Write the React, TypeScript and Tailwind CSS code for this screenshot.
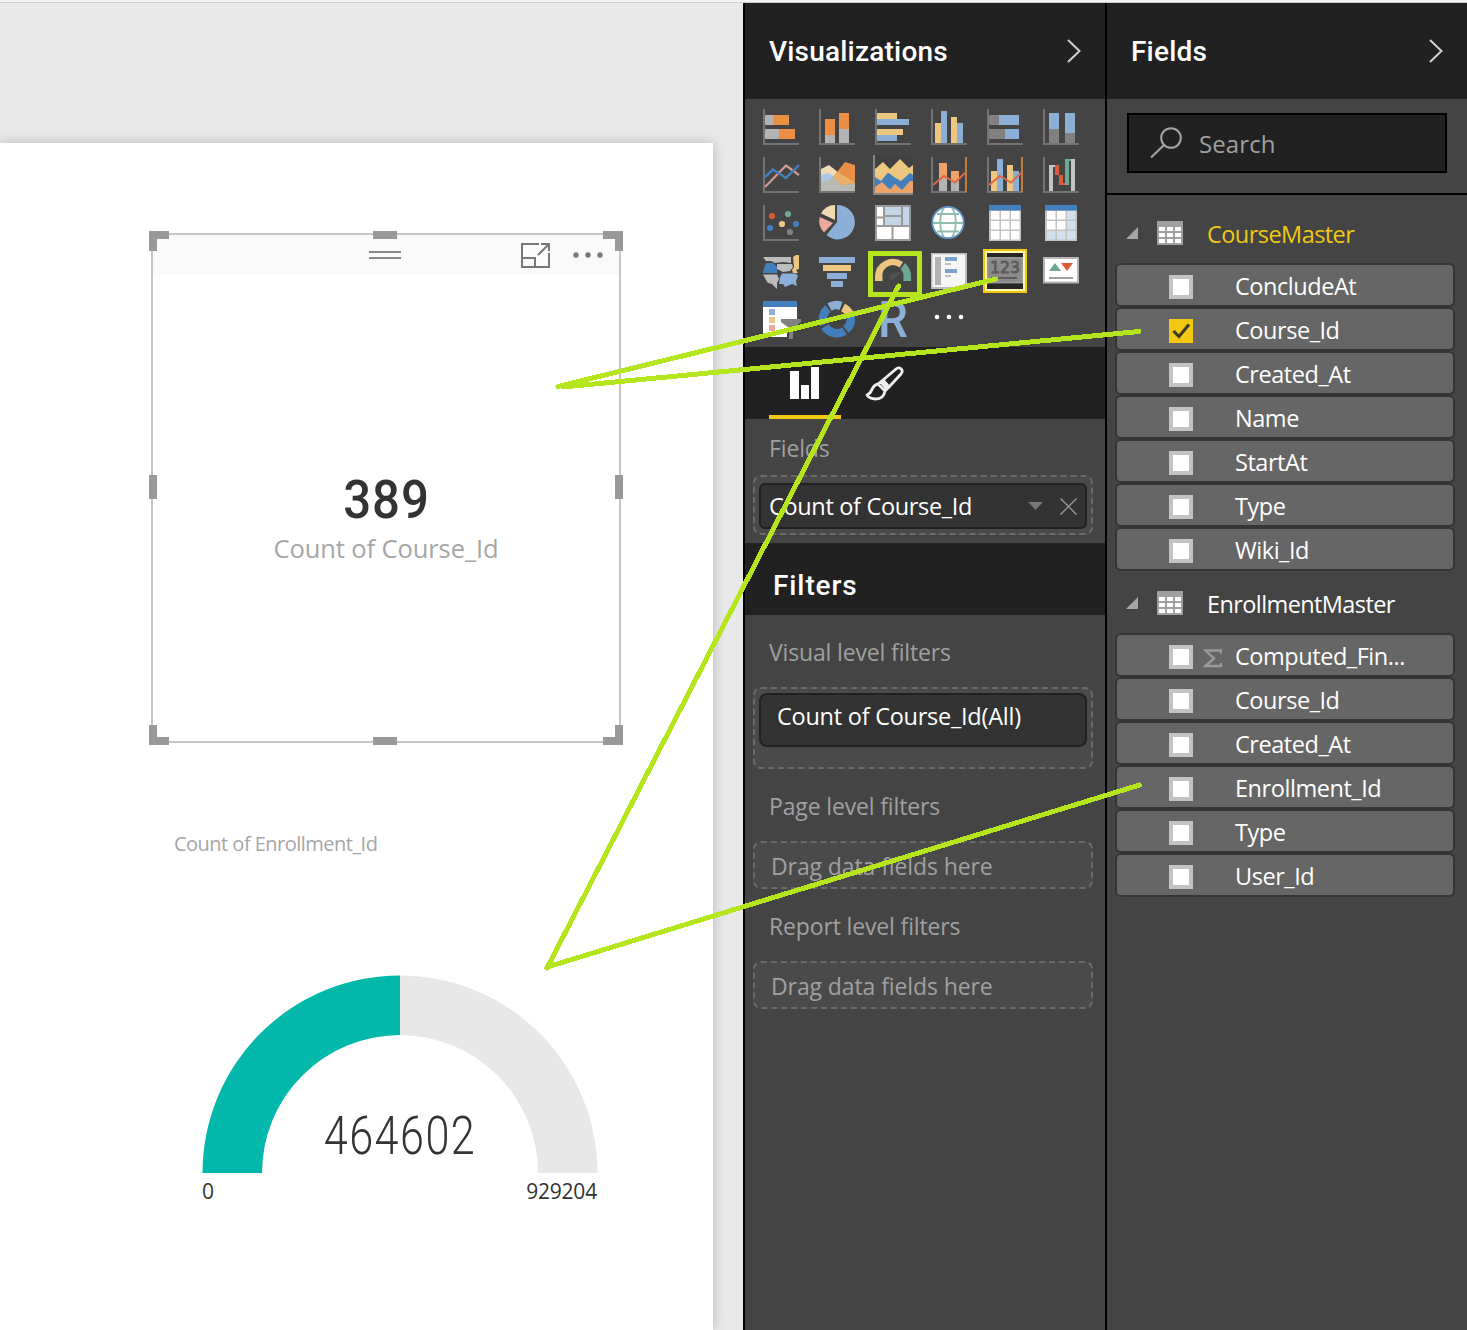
import type { ReactNode } from "react";

const OR = "#ea8f43", GY = "#b3b3b3", DG = "#808080", YE = "#edc680", BL = "#8bafd6", DB = "#447fbd", RD = "#dd5b3a", GN = "#6ca892", PK = "#eaa99b";

type R = [number, number, number, number, string];
const Bars = ({ r }: { r: R[] }) => (
  <>
    {r.map(([x, y, x2, y2, c], i) => (
      <rect key={i} x={x} y={y} width={x2 - x} height={y2 - y} fill={c} />
    ))}
  </>
);
const Axis = () => <path d="M0 0H2V34H36V36H0Z" fill="#747474" />;

const clustered: R[] = [[4, 14, 10, 34, YE], [10, 2, 16, 34, BL], [20, 8, 26, 34, YE], [26, 14, 32, 34, BL]];

const GridTable = ({ tint }: { tint?: boolean }) => (
  <>
    <Bars r={[[2, 0, 34, 36, "#c3c3c3"], [2, 0, 34, 5.5, DB]]} />
    {[6, 16, 26].map((y) =>
      [4, 14, 24].map((x) => (
        <rect key={x + "-" + y} x={x} y={y} width="8.5" height="8.5" fill={tint && (x === 24 || y === 26) ? "#d3e0ee" : "#fff"} />
      ))
    )}
  </>
);

const icons: ReactNode[] = [
  <><Axis /><Bars r={[[2, 6, 10, 16, GY], [10, 6, 26, 16, OR], [2, 20, 16, 30, GY], [16, 20, 32, 30, OR]]} /></>,
  <><Axis /><Bars r={[[6, 10, 16, 26, OR], [6, 26, 16, 34, GY], [20, 4, 30, 20, OR], [20, 20, 30, 34, GY]]} /></>,
  <><Axis /><Bars r={[[2, 4, 22, 10, YE], [2, 10, 34, 16, BL], [2, 20, 28, 26, YE], [2, 26, 22, 32, BL]]} /></>,
  <><Axis /><Bars r={clustered} /></>,
  <><Axis /><Bars r={[[2, 6, 12, 16, DG], [12, 6, 32, 16, BL], [2, 20, 18, 30, DG], [18, 20, 32, 30, BL]]} /></>,
  <><Axis /><Bars r={[[6, 4, 16, 20, BL], [6, 20, 16, 34, DG], [22, 4, 32, 24, BL], [22, 24, 32, 34, DG]]} /></>,
  <>
    <Axis />
    <path d="M2 30L23 8.5L36 18" fill="none" stroke="#cf9a90" strokeWidth="2.2" />
    <path d="M2 20L10 12.5L23 21L36 8" fill="none" stroke={DB} strokeWidth="2.4" />
  </>,
  <>
    <Axis />
    <path d="M2 12L10 8L20 16L20 30H2Z" fill="#f2dcb6" />
    <path d="M2 18L9 16L20 22L20 30H2Z" fill="#a9cbe6" />
    <path d="M2 24L9 24L14 20L24 28L36 25V34H2Z" fill="#b9b9b6" />
    <path d="M14 20L26 5L36 8V26L24 28.5Z" fill={OR} />
    <path d="M14 20L19 15L36 25.5L24 28.5Z" fill="#eaaf68" />
  </>,
  <>
    <path d="M-2 -2H0V36H38V38H-2Z" fill="#858585" />
    <path d="M0 -2H38V36H0Z" fill="#404040" />
    <path d="M0 12L8 5L15 12L25 2L34 11L38 8V36H0Z" fill={YE} />
    <path d="M0 20L6 24L13 15.5L19 20L26 24L35 16L38 18V36H0Z" fill={DB} />
    <path d="M0 30L7 25L15 32.5L20 27L27 33L35 24L38 24V36H0Z" fill="#eda267" />
  </>,
  <>
    <Axis />
    <Bars r={[[8, 6, 16, 22, "#eda267"], [8, 22, 16, 34, GY], [20, 14, 28, 24, "#eda267"], [20, 24, 28, 34, GY], [34, 0, 36, 35, "#c47c3c"]]} />
    <path d="M2 28L13 19L24 25.5L34 16" fill="none" stroke="#dd6a45" strokeWidth="2" />
  </>,
  <>
    <Axis />
    <Bars r={[...clustered, [34, 0, 36, 35, "#c47c3c"]]} />
    <path d="M2 28L13 19L24 25.5L34 16" fill="none" stroke="#dd6a45" strokeWidth="2" />
  </>,
  <>
    <Axis />
    <Bars r={[[6, 8, 10, 34, "#c4c4c4"], [10, 8, 12, 10, "#c4c4c4"], [12, 8, 16, 18, RD], [16, 18, 20, 28, RD], [20, 26, 22, 28, RD], [22, 2, 26, 28, GN], [26, 2, 28, 4, GN], [28, 2, 32, 34, "#c4c4c4"]]} />
  </>,
  <>
    <Axis />
    {([[9, 11, RD], [25, 9, GN], [19, 19, YE], [33, 19, DB], [7, 23, DB], [27, 27, DG]] as [number, number, string][]).map(([x, y, c]) => (
      <circle key={x} cx={x} cy={y} r="3.1" fill={c} />
    ))}
  </>,
  <>
    <path d="M18 0A17 17.2 0 1 1 7.5 30L18 17Z" fill={BL} />
    <path d="M2 8.5A16 16 0 0 1 16 0V15Z" fill="#f0dab2" />
    <path d="M0.8 12L14 18L5 27.5A16 16 0 0 1 0.8 12Z" fill={PK} />
  </>,
  <Bars r={[[0, 0, 36, 36, "#9a9a9a"], [2, 2, 8, 11.5, "#fff"], [2, 13.5, 8, 20, "#fff"], [10, 2, 26, 10, "#c5d6e9"], [10, 12, 26, 20, "#c5d6e9"], [28, 2, 34, 20, "#c5d6e9"], [2, 22, 16.5, 34, "#fff"], [18.5, 22, 34, 34, "#fff"]]} />,
  <>
    <circle cx="17" cy="17.5" r="15.7" fill="#fff" stroke="#5b93c6" strokeWidth="1.8" />
    <path d="M2 18H32M6 9H28M6 26.5H28M13 3C8 10 8 25 13 32M21 3C26 10 26 25 21 32" fill="none" stroke="#8fbcac" strokeWidth="1.8" />
  </>,
  <GridTable />,
  <GridTable tint />,
  <>
    <path d="M0 4H28V10L20 9L12 10L8 8L3 8Z" fill="#bdbdbd" />
    <path d="M30 4L33 2H36V16L33 17L35 20L30 20L29 17L31 14Z" fill={YE} />
    <path d="M3 10H10L14 14V20H0L1 15Z" fill={DB} />
    <path d="M14 11H29L30 14L27 18L20 19L14 16Z" fill="#bdbdbd" />
    <path d="M0 21.5H14L16 26L14 30V36L9 31L5 30L3 27Z" fill="#bdbdbd" />
    <path d="M17 24L19 20.5H33L35 23L33 28L34 33L29 31L22 34L20 31L16 31Z" fill={BL} />
  </>,
  <Bars r={[[0, 4, 36, 10, BL], [4, 12, 32, 18, YE], [8, 20, 28, 26, BL], [12, 28, 24, 34, BL]]} />,
  <>
    <path d="M0 28V24A18 18 0 0 1 28 9L24.5 14.5A10.5 10.5 0 0 0 7.5 24V28Z" fill={YE} />
    <path d="M30 10A18 18 0 0 1 36 24V28H28.5V24A10 10 0 0 0 25.5 16Z" fill={GN} />
    <path d="M27 18L19 26A2.6 2.6 0 1 1 15 22Z" fill="#525252" />
  </>,
  <Bars r={[[0, 0, 36, 36, "#bfbfbf"], [1.5, 1.5, 34, 34, "#f6f6f6"], [4, 4, 10, 32, GY], [14, 4, 26, 8, "#7ba3d0"], [14, 10, 20, 12, "#c0c0c0"], [14, 16, 26, 20, "#7ba3d0"], [14, 22, 20, 24, "#c0c0c0"]]} />,
  <>
    <rect width="36" height="36" fill="#262626" />
    <rect x="0.7" y="4.7" width="34.6" height="25" fill="#8b8b8b" stroke="#9b9b9b" strokeWidth="1.4" />
    <text x="3" y="20" fontFamily="DejaVu Sans" fontSize="16.5" textLength="30" lengthAdjust="spacingAndGlyphs" fill="#5c5c5c" stroke="#5c5c5c" strokeWidth="0.9">123</text>
    <rect x="4" y="24" width="26" height="2" fill="#5c5c5c" />
    <path d="M-4 -4H40V40H-4ZM-2 -2V38H38V-2Z" fill="#f2c811" fillRule="evenodd" />
    <path d="M-2 -2H38V38H-2ZM0 0V36H36V0Z" fill="#fff7b0" fillRule="evenodd" />
  </>,
  <>
    <rect x="1" y="5" width="34" height="24.5" fill="#fff" stroke="#b5b5b5" strokeWidth="2" />
    <path d="M6 18L12 10L18 18Z" fill={GN} />
    <path d="M18 10H30L24 18Z" fill={RD} />
    <rect x="6" y="24" width="24" height="2" fill="#a0a0a0" />
  </>,
  <>
    <Bars r={[[0, 0, 34, 36, "#fff"], [0, 0, 34, 6, DB], [6, 8, 12, 14, BL], [6, 16, 12, 22, YE], [6, 24, 12, 30, PK]]} />
    <path d="M24 28H34V36H24Z" fill="#444" />
    <path d="M18 18H38V21L30 27V38H26V27L18 21Z" fill="#808080" />
  </>,
  <g fill="none" strokeWidth="8.5">
    <path d="M10.5 6A13.5 13.5 0 0 1 22 5" stroke={BL} />
    <path d="M24 6.5A13.5 13.5 0 0 1 30.5 13" stroke={YE} />
    <path d="M31.5 15A13.8 13.8 0 0 1 27 28.5" stroke={DB} />
    <path d="M25.5 30A13.8 13.8 0 0 1 6 25.5" stroke={DB} />
    <path d="M5 23.5A13.8 13.8 0 0 1 9 7.5" stroke={DB} />
  </g>,
  <text x="3" y="36" fontFamily="Roboto" fontWeight="500" fontSize="50.5" textLength="30" lengthAdjust="spacingAndGlyphs" fill={BL}>R</text>,
  <g fill="#fff"><circle cx="6" cy="16" r="2.3" /><circle cx="18" cy="16" r="2.3" /><circle cx="30" cy="16" r="2.3" /></g>,
];

const PanelHead = ({ title }: { title: string }) => (
  <header className="flex h-24 shrink-0 items-center justify-between bg-[#212121] pl-6 pr-[23px]">
    <h2 className="pt-[2px] font-['Roboto'] text-[28px] font-medium tracking-[0.2px] text-white">{title}</h2>
    <svg width="16" height="26" viewBox="0 0 16 26" fill="none" stroke="#d0d0d0" strokeWidth="2"><path d="M2 2L13.5 13L2 24" /></svg>
  </header>
);

const Label = ({ children }: { children: ReactNode }) => (
  <div className="pb-[2px] pl-4 text-[23px] leading-[30px] tracking-[-0.15px] text-[#a0a0a0]">{children}</div>
);

const Drop = () => (
  <div className="flex h-12 items-center rounded-lg border-2 border-dashed border-[#6a6a6a] bg-[#4a4a4a] pl-4 pt-[2px] text-[23px] tracking-[-0.1px] text-[#a0a0a0]">
    Drag data fields here
  </div>
);

const Field = ({ name, checked, sum }: { name: string; checked?: boolean; sum?: boolean }) => (
  <li className="flex h-11 items-center rounded-md border-2 border-[#353535] bg-[#666] pl-13 pt-1">
    {checked ? (
      <svg className="size-6 bg-[#f2c811]" viewBox="0 0 24 24" fill="none" stroke="#3a3a30" strokeWidth="3"><path d="M4.5 12L10 17.5L20 5.5" /></svg>
    ) : (
      <span className="size-6 border-4 border-[#c3c3c3] bg-white" />
    )}
    <span className="flex w-[42px] items-center pl-[10px] pt-[2px]">
      {sum && (
        <svg width="19" height="19" viewBox="0 0 19 19" fill="none" stroke="#9a9a9a" strokeWidth="2.4"><path d="M18 4.5V1.5H2.5L11 9.5L2.5 17H18V14" /></svg>
      )}
    </span>
    <span className="text-[23.5px] tracking-[-0.45px] text-white">{name}</span>
  </li>
);

const TableHead = ({ name, active }: { name: string; active?: boolean }) => (
  <div className="flex h-[62px] items-center pl-[11px] pt-[2px]">
    <svg width="12" height="12" viewBox="0 0 12 12"><path d="M12 0V12H0Z" fill="#a6a6a6" /></svg>
    <svg className="ml-[19px] -mt-px" width="26" height="24" viewBox="0 0 26 24">
      <rect width="26" height="24" fill="#a0a0a0" />
      {[6, 12, 18].map((y) => [2, 10, 18].map((x) => <rect key={x + "-" + y} x={x} y={y} width="6" height="4" fill="#fff" />))}
    </svg>
    <span className={active ? "ml-6 mt-1 text-[23.5px] tracking-[-0.55px] text-[#f2c811]" : "ml-6 mt-1 text-[23.5px] tracking-[-0.6px] text-white"}>{name}</span>
  </div>
);

const Handles = () => (
  <svg className="absolute -left-1 -top-1" width="474" height="514" fill="#999">
    <path d="M0 0H20V8H8V20H0ZM454 0H474V20H466V8H454ZM0 494H8V506H20V514H0ZM466 494H474V514H454V506H466Z" />
    <path d="M224 0H248V8H224ZM224 506H248V514H224ZM0 244H8V268H0ZM466 244H474V268H466Z" />
  </svg>
);

export default function App() {
  return (
    <div className="relative flex h-[1330px] w-[1467px] flex-col overflow-hidden bg-[#f3f3f3] font-['Open_Sans',sans-serif]">
      <div className="h-[3px] shrink-0 border-b border-[#cfcfcf]" />
      <div className="flex min-h-0 flex-1">
        <main className="w-[743px] bg-[#e9e9e9] pt-[140px]">
          <div className="h-full w-[713px] bg-white pl-[151px] pt-[90px] shadow-[0_0_12px_rgba(0,0,0,0.22)]">
            <section className="relative flex h-[510px] w-[470px] flex-col border-2 border-[#c6c6c6]">
              <div className="flex h-10 shrink-0 items-center bg-[#fafafa] pl-[216px]">
                <svg width="32" height="8" viewBox="0 0 32 8" fill="#888"><path d="M0 0H32V2H0ZM0 6H32V8H0Z" /></svg>
                <svg className="ml-[120px]" width="29" height="25" viewBox="0 0 29 25" fill="none" stroke="#777" strokeWidth="2">
                  <path d="M18 1H1V24H28V10M1 15H14V24M17 12L27 2M20 1H28V8" />
                </svg>
                <svg className="ml-[23px]" width="30" height="6" viewBox="0 0 30 6" fill="#777"><circle cx="3" cy="3" r="2.7" /><circle cx="15" cy="3" r="2.7" /><circle cx="27" cy="3" r="2.7" /></svg>
              </div>
              <div className="flex flex-col items-center pt-[191px]">
                <div className="ml-[2px] scale-x-[0.91] font-['Roboto'] text-[54px] font-medium leading-[68px] tracking-[1px] text-[#333]">389</div>
                <div className="-mt-[2px] text-[25.5px] leading-8 tracking-[-0.1px] text-[#a6a6a6]">Count of Course_Id</div>
              </div>
              <Handles />
            </section>
            <section className="w-[470px] pl-[23px] pt-[85px]">
              <div className="text-[20px] leading-8 tracking-[-0.52px] text-[#a6a6a6]">Count of Enrollment_Id</div>
              <div className="relative ml-7 mt-[115px] w-[396px]">
                <svg width="396" height="198" viewBox="0 0 396 198">
                  <path d="M0.5 198A197.5 197.5 0 0 1 198 0.5V60A138 138 0 0 0 60 198Z" fill="#01b8aa" />
                  <path d="M198 0.5A197.5 197.5 0 0 1 395.5 198H336A138 138 0 0 0 198 60Z" fill="#e8e8e8" />
                </svg>
                <div className="absolute inset-x-0 top-[126px] scale-x-[0.8] text-center font-['Roboto'] text-[54px] font-light leading-[70px] tracking-[1.8px] text-[#333]">464602</div>
                <div className="flex justify-between pr-px pt-1 text-[21px] leading-7 tracking-[-0.2px] text-[#333]">
                  <span>0</span>
                  <span>929204</span>
                </div>
              </div>
            </section>
          </div>
        </main>

        <aside className="flex w-[364px] flex-col border-x-2 border-black bg-[#444]">
          <PanelHead title="Visualizations" />
          <div className="grid h-[248px] shrink-0 auto-rows-[36px] grid-cols-[repeat(6,36px)] gap-x-5 gap-y-3 pl-[18px] pt-[10px]">
            {icons.map((d, i) => (
              <svg key={i} width="36" height="36" viewBox="0 0 36 36" overflow="visible">{d}</svg>
            ))}
          </div>
          <div className="flex h-[72px] shrink-0 bg-[#212121] pl-6">
            <div className="flex w-[72px] justify-center border-b-4 border-[#f2c811] pt-5">
              <svg width="30" height="33" viewBox="0 0 30 33" fill="#fff"><path d="M0 4H9V32H0ZM11 18H19V32H11ZM21 0H29V32H21Z" /></svg>
            </div>
            <svg className="ml-6 mt-[19px]" width="39" height="36" viewBox="0 0 39 36" fill="none" stroke="#f0f0f0" strokeWidth="2.8" strokeLinejoin="round">
              <path d="M18 14L31 3C35 0 39 4 36 8L24 21M18 14L13 18L20 25L24 21ZM16 16L22 23M13 18C6 19 8 27 2 29C3 33 18 37 20 25" />
            </svg>
          </div>
          <div className="h-[124px] shrink-0 pl-2 pr-3 pt-[14px]">
            <Label>Fields</Label>
            <div className="mt-[10px] flex h-[60px] flex-col rounded-lg border-2 border-dashed border-[#6a6a6a] bg-[#4a4a4a] px-1 pt-[6px]">
              <div className="flex h-[46px] items-center rounded-md border-2 border-[#212121] bg-[#333] pl-2 pr-2">
                <span className="flex-1 pt-[2px] text-[23.5px] tracking-[-0.33px] text-white">Count of Course_Id</span>
                <svg width="15" height="8" viewBox="0 0 15 8"><path d="M0 0H15L7.5 8Z" fill="#777" /></svg>
                <svg className="ml-[17px]" width="17" height="17" viewBox="0 0 17 17" stroke="#999" strokeWidth="1.4"><path d="M0.5 0.5L16.5 16.5M16.5 0.5L0.5 16.5" /></svg>
              </div>
            </div>
          </div>
          <div className="flex h-[72px] shrink-0 items-center bg-[#212121] pl-7 pt-[14px]">
            <h2 className="font-['Roboto'] text-[28px] font-medium tracking-[0.9px] text-white">Filters</h2>
          </div>
          <div className="pl-2 pr-3 pt-[22px]">
            <Label>Visual level filters</Label>
            <div className="mt-[18px] h-[82px] rounded-lg border-2 border-dashed border-[#6a6a6a] bg-[#4a4a4a] px-1 pt-1">
              <div className="h-[54px] rounded-lg border-2 border-[#212121] bg-[#333] pl-4 pt-[5px] text-[23.5px] leading-8 tracking-[-0.25px] text-white">Count of Course_Id(All)</div>
            </div>
            <div className="pt-[22px]"><Label>Page level filters</Label></div>
            <div className="mt-[18px]"><Drop /></div>
            <div className="pt-[22px]"><Label>Report level filters</Label></div>
            <div className="mt-[18px]"><Drop /></div>
          </div>
        </aside>

        <aside className="flex w-[360px] flex-col bg-[#444]">
          <PanelHead title="Fields" />
          <div className="h-24 shrink-0 border-b-2 border-black px-5 pt-[14px]">
            <div className="flex h-[60px] items-center border-2 border-black bg-[#212121] pl-[21px]">
              <svg width="34" height="32" viewBox="0 0 34 32" fill="none" stroke="#a6a6a6" strokeWidth="2"><circle cx="21" cy="11" r="9.8" /><path d="M14 18L1 30.5" /></svg>
              <span className="ml-[15px] mt-px text-[24px] tracking-[0.1px] text-[#a0a0a0]">Search</span>
            </div>
          </div>
          <div className="pl-2 pr-3 pt-[6px]">
            <TableHead name="CourseMaster" active />
            <ul>
              <Field name="ConcludeAt" />
              <Field name="Course_Id" checked />
              <Field name="Created_At" />
              <Field name="Name" />
              <Field name="StartAt" />
              <Field name="Type" />
              <Field name="Wiki_Id" />
            </ul>
            <TableHead name="EnrollmentMaster" />
            <ul>
              <Field name="Computed_Fin..." sum />
              <Field name="Course_Id" />
              <Field name="Created_At" />
              <Field name="Enrollment_Id" />
              <Field name="Type" />
              <Field name="User_Id" />
            </ul>
          </div>
        </aside>
      </div>

      <svg className="pointer-events-none absolute inset-0" width="1467" height="1330" fill="none" stroke="#b5e61d" strokeWidth="5" strokeLinecap="round" shapeRendering="crispEdges">
        <path d="M996 279L558 386.5M563 387L1139 331.5M898.5 286L547 968M549 966.5L1139.5 785" />
        <rect x="870.5" y="253.5" width="49" height="41" strokeLinejoin="miter" />
      </svg>
    </div>
  );
}
